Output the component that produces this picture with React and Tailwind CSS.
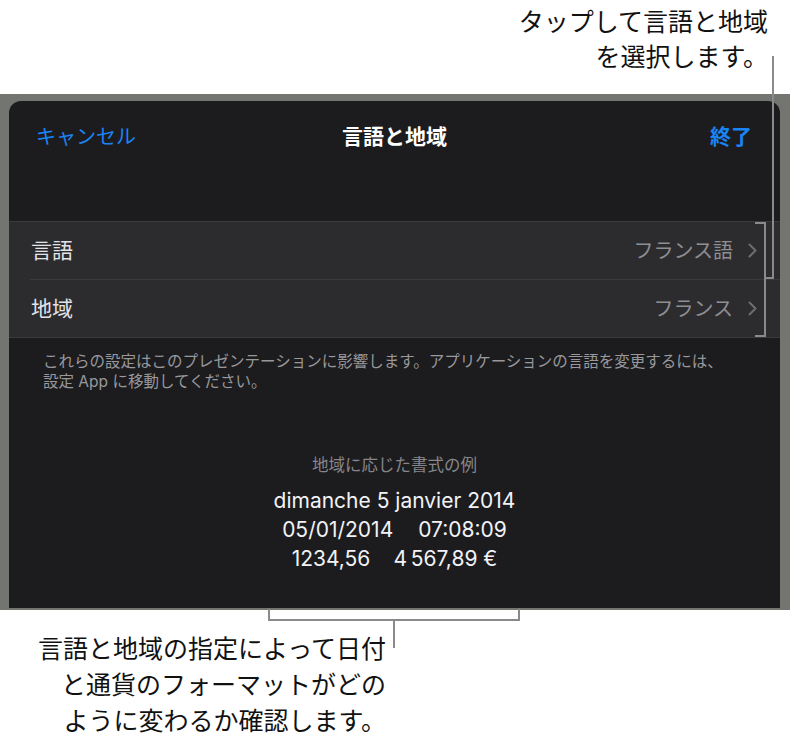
import React from 'react';

const Chevron = () => (
  <svg width="9" height="15" viewBox="0 0 9 15" className="shrink-0">
    <polyline points="1.5,1.5 7.5,7.5 1.5,13.5" fill="none" stroke="#6d6d72" strokeWidth="2" strokeLinecap="round" strokeLinejoin="round" />
  </svg>
);

function Row({ label, value, last }) {
  return (
    <div className="flex h-[57px] items-center pl-[22px] pr-[23px]">
      <span className="text-[21px] text-[#e3e3e8]">{label}</span>
      <div className="ml-auto flex items-center gap-[15px]">
        <span className="text-[20px] text-[#8e8e93]">{value}</span>
        <Chevron />
      </div>
    </div>
  );
}

export default function App() {
  return (
    <div className="relative h-[739px] w-[790px] overflow-hidden bg-white font-['Inter','Noto_Sans_CJK_JP',sans-serif]">
      {/* top callout */}
      <div className="pt-[3px] pr-[22px] text-right text-[25px] leading-[35px] text-[#111] font-['Noto_Sans_CJK_JP',sans-serif]">
        <div>タップして言語と地域</div>
        <div>を選択します。</div>
      </div>

      {/* device frame */}
      <div className="mt-[21px] bg-[#737670] pl-[9px] pr-[10px] pt-[7px] pb-[2px]">
        <div className="flex h-[507px] flex-col rounded-t-[12px] bg-[#1c1c1e]">
          {/* nav bar */}
          <div className="relative mb-[48px] flex h-[72px] items-center pl-[27px] pr-[28px]">
            <span className="text-[20px] text-[#1a84f5]">キャンセル</span>
            <span className="absolute left-1/2 -translate-x-1/2 text-[21px] font-bold text-white">言語と地域</span>
            <span className="ml-auto text-[21px] font-bold text-[#1a84f5]">終了</span>
          </div>

          {/* rows */}
          <div className="border-y border-[#3a3a3c] bg-[#2c2c2e]">
            <Row label="言語" value="フランス語" />
            <div className="ml-[21px] h-px bg-[#3a3a3c]" />
            <Row label="地域" value="フランス" />
          </div>

          <p className="pl-[34px] pt-[14px] text-[15.5px] leading-[20px] text-[#98989d]">
            これらの設定はこのプレゼンテーションに影響します。アプリケーションの言語を変更するには、
            <br />
            設定 App に移動してください。
          </p>

          {/* format example */}
          <div className="mt-[62px] flex flex-col items-center">
            <div className="text-[16.5px] leading-[22px] text-[#86868b]">地域に応じた書式の例</div>
            <div className="mt-[10px] flex flex-col items-center text-[21px] leading-[29px] text-[#f2f2f7]">
              <div>dimanche 5 janvier 2014</div>
              <div className="flex gap-[25px]">
                <span>05/01/2014</span>
                <span>07:08:09</span>
              </div>
              <div className="flex gap-[23px]">
                <span>1234,56</span>
                <span>4{'\u202f'}567,89 €</span>
              </div>
            </div>
          </div>
        </div>
      </div>

      {/* bottom callout text */}
      <div className="mt-[19px] w-[386px] text-right text-[25px] leading-[36px] text-[#111] font-['Noto_Sans_CJK_JP',sans-serif]">
        <div>言語と地域の指定によって日付</div>
        <div>と通貨のフォーマットがどの</div>
        <div>ように変わるか確認します。</div>
      </div>

      {/* leader lines (overlay) */}
      <div className="absolute left-[772px] top-[56px] h-[223px] w-[2px] bg-[#8a8a8a]" />
      <div className="absolute left-[764px] top-[277px] h-[2px] w-[10px] bg-[#8a8a8a]" />
      <div className="absolute left-[755px] top-[222px] h-[115px] w-[11px] border-y-2 border-r-2 border-[#8a8a8a]" />

      <div className="absolute left-[268px] top-[609px] h-[12px] w-[252px] border-x-2 border-b-2 border-[#8a8a8a]" />
      <div className="absolute left-[393px] top-[619px] h-[29px] w-[2px] bg-[#8a8a8a]" />
    </div>
  );
}
